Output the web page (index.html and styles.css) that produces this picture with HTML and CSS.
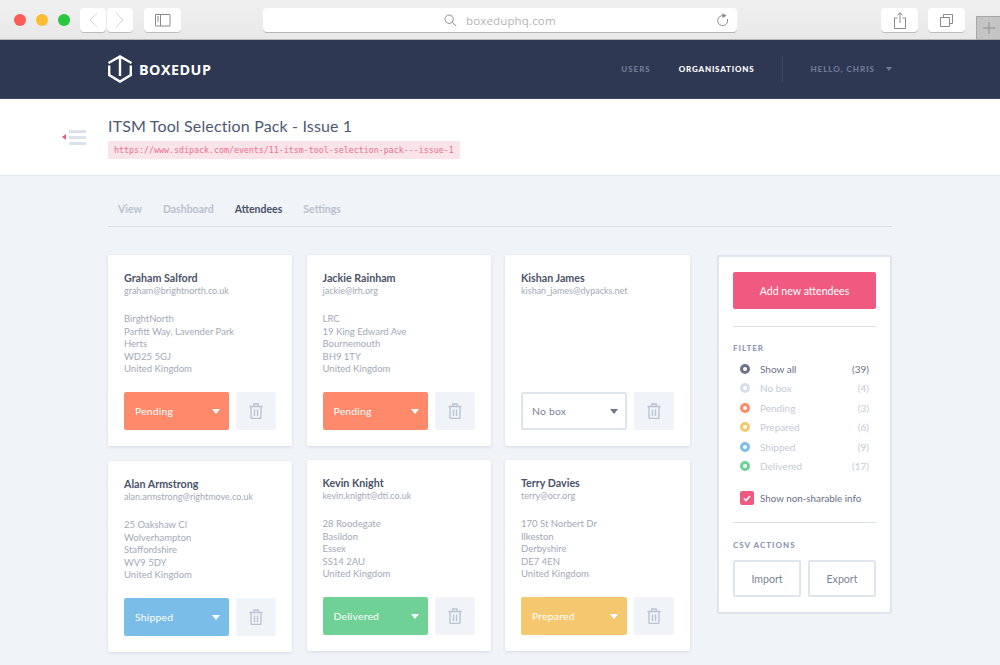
FILE: index.html
```html
<!DOCTYPE html>
<html lang="en">
<head>
    <meta charset="UTF-8">
    <title>Boxedup - Attendees</title>
    <link rel="stylesheet" href="styles.css">
</head>
<body>
    <!-- Browser chrome -->
    <div class="chrome">
        <div class="lights">
            <span class="light red"></span>
            <span class="light yellow"></span>
            <span class="light green"></span>
        </div>
        <div class="chrome-group">
            <button class="chrome-btn narrow"><svg width="12" height="16" viewBox="0 0 12 16"><path d="M10 1 3 8l7 7" fill="none" stroke="#d4d4d4" stroke-width="1"/></svg></button>
            <button class="chrome-btn narrow"><svg width="12" height="16" viewBox="0 0 12 16"><path d="M2 1l7 7-7 7" fill="none" stroke="#d4d4d4" stroke-width="1"/></svg></button>
        </div>
        <button class="chrome-btn wide sidebar-btn"><svg width="16" height="13" viewBox="0 0 16 13"><path d="M.5.5h14.5v11.5H.5zM5.5.5v11.5" fill="none" stroke="#8a8a8a"/><path d="M2 3h2M2 5h2M2 7h2" stroke="#8a8a8a"/></svg></button>
        <div class="address">
            <svg class="search" width="13" height="13" viewBox="0 0 13 13"><circle cx="5.2" cy="5.2" r="4.2" fill="none" stroke="#8f8f8f"/><path d="M8.2 8.2l4 4" stroke="#8f8f8f"/></svg>
            <span class="address-text">boxeduphq.com</span>
            <svg class="reload" width="13" height="14" viewBox="0 0 13 14"><path d="M7.5 2.7A5 5 0 1 0 11.4 6" fill="none" stroke="#8a8a8a"/><path d="M6.5 0l4 2.7-4 2.3z" fill="#8a8a8a"/></svg>
        </div>
        <button class="chrome-btn wide share-btn"><svg width="12" height="17" viewBox="0 0 12 17"><path d="M3.5 6H.5v10.5h11V6h-3M6 11V1M3.5 3.2 6 .8l2.500 2.400" fill="none" stroke="#8a8a8a"/></svg></button>
        <button class="chrome-btn wide tabs-btn"><svg width="13" height="13" viewBox="0 0 13 13"><path d="M.5 3.500h9v9h-9zM3.500 3.500v-3h9v9h-3" fill="none" stroke="#8a8a8a"/></svg></button>
        <div class="new-tab"><svg width="12" height="12" viewBox="0 0 12 12"><path d="M6 0v12M0 6h12" stroke="#8e8e8e"/></svg></div>
    </div>

    <!-- Top navigation -->
    <header class="topbar">
        <div class="logo">
            <svg width="26" height="28" viewBox="0 0 26 28"><path d="M2.200 10.500V20L13 26.500 23.800 20v-9.500M1.500 8 13 1.500 24.500 8M13 2v19" fill="none" stroke="#fff" stroke-width="2.400"/></svg>
            <span class="logo-text">BOXEDUP</span>
        </div>
        <nav class="topnav">
            <a class="topnav-link">USERS</a>
            <a class="topnav-link active">ORGANISATIONS</a>
            <span class="topnav-sep"></span>
            <a class="topnav-link hello">HELLO, CHRIS</a>
            <span class="caret-small"></span>
        </nav>
    </header>

    <!-- Event title -->
    <section class="event">
        <div class="toggle">
            <span class="toggle-arrow"></span>
            <div class="toggle-bars"><i></i><i></i><i></i></div>
        </div>
        <div>
            <h1 class="event-title">ITSM Tool Selection Pack - Issue 1</h1>
            <code class="event-url">https://www.sdipack.com/events/11-itsm-tool-selection-pack---issue-1</code>
        </div>
    </section>

    <main class="content">
        <div class="tabs">
            <a class="tab">View</a>
            <a class="tab">Dashboard</a>
            <a class="tab active">Attendees</a>
            <a class="tab">Settings</a>
        </div>

        <div class="layout">
            <div class="cards">
                <div class="card">
                    <h3>Graham Salford</h3>
                    <p class="email">graham@brightnorth.co.uk</p>
                    <p class="addr">BirghtNorth<br>Parfitt Way, Lavender Park<br>Herts<br>WD25 5GJ<br>United Kingdom</p>
                    <div class="card-actions">
                        <div class="status pending">Pending<span class="caret"></span></div>
                        <button class="trash"><svg width="14" height="16" viewBox="0 0 14 16"><path d="M2 4v10.200c0 .7.5 1.300 1.200 1.300h7.600c.7 0 1.200-.6 1.200-1.300V4M.5 3.500h13M4.800 3.300V1h4.400v2.300M5.500 6.500v6.500M8.500 6.500v6.500" fill="none" stroke="#b9c3d2" stroke-width="1.400"/></svg></button>
                    </div>
                </div>
                <div class="card">
                    <h3>Jackie Rainham</h3>
                    <p class="email">jackie@lrh.org</p>
                    <p class="addr">LRC<br>19 King Edward Ave<br>Bournemouth<br>BH9 1TY<br>United Kingdom</p>
                    <div class="card-actions">
                        <div class="status pending">Pending<span class="caret"></span></div>
                        <button class="trash"><svg width="14" height="16" viewBox="0 0 14 16"><path d="M2 4v10.200c0 .7.5 1.300 1.200 1.300h7.600c.7 0 1.200-.6 1.200-1.300V4M.5 3.500h13M4.800 3.300V1h4.400v2.300M5.500 6.500v6.500M8.500 6.500v6.500" fill="none" stroke="#b9c3d2" stroke-width="1.400"/></svg></button>
                    </div>
                </div>
                <div class="card">
                    <h3>Kishan James</h3>
                    <p class="email">kishan_james@dypacks.net</p>
                    <p class="addr"></p>
                    <div class="card-actions">
                        <div class="status nobox">No box<span class="caret"></span></div>
                        <button class="trash"><svg width="14" height="16" viewBox="0 0 14 16"><path d="M2 4v10.200c0 .7.5 1.300 1.200 1.300h7.600c.7 0 1.200-.6 1.200-1.300V4M.5 3.500h13M4.800 3.300V1h4.400v2.300M5.500 6.500v6.500M8.500 6.500v6.500" fill="none" stroke="#b9c3d2" stroke-width="1.400"/></svg></button>
                    </div>
                </div>
                <div class="card">
                    <h3>Alan Armstrong</h3>
                    <p class="email">alan.armstrong@rightmove.co.uk</p>
                    <p class="addr">25 Oakshaw Cl<br>Wolverhampton<br>Staffordshire<br>WV9 5DY<br>United Kingdom</p>
                    <div class="card-actions">
                        <div class="status shipped">Shipped<span class="caret"></span></div>
                        <button class="trash"><svg width="14" height="16" viewBox="0 0 14 16"><path d="M2 4v10.200c0 .7.5 1.300 1.200 1.300h7.600c.7 0 1.200-.6 1.200-1.300V4M.5 3.500h13M4.800 3.300V1h4.400v2.300M5.500 6.500v6.500M8.500 6.500v6.500" fill="none" stroke="#b9c3d2" stroke-width="1.400"/></svg></button>
                    </div>
                </div>
                <div class="card raised">
                    <h3>Kevin Knight</h3>
                    <p class="email">kevin.knight@dti.co.uk</p>
                    <p class="addr">28 Roodegate<br>Basildon<br>Essex<br>SS14 2AU<br>United Kingdom</p>
                    <div class="card-actions">
                        <div class="status delivered">Delivered<span class="caret"></span></div>
                        <button class="trash"><svg width="14" height="16" viewBox="0 0 14 16"><path d="M2 4v10.200c0 .7.5 1.300 1.200 1.300h7.600c.7 0 1.200-.6 1.200-1.300V4M.5 3.500h13M4.800 3.300V1h4.400v2.300M5.500 6.500v6.500M8.500 6.500v6.500" fill="none" stroke="#b9c3d2" stroke-width="1.400"/></svg></button>
                    </div>
                </div>
                <div class="card raised">
                    <h3>Terry Davies</h3>
                    <p class="email">terry@ocr.org</p>
                    <p class="addr">170 St Norbert Dr<br>Ilkeston<br>Derbyshire<br>DE7 4EN<br>United Kingdom</p>
                    <div class="card-actions">
                        <div class="status prepared">Prepared<span class="caret"></span></div>
                        <button class="trash"><svg width="14" height="16" viewBox="0 0 14 16"><path d="M2 4v10.200c0 .7.5 1.300 1.200 1.300h7.600c.7 0 1.200-.6 1.200-1.300V4M.5 3.500h13M4.800 3.300V1h4.400v2.300M5.500 6.500v6.500M8.500 6.500v6.500" fill="none" stroke="#b9c3d2" stroke-width="1.400"/></svg></button>
                    </div>
                </div>
            </div>

            <!-- Sidebar -->
            <aside class="panel">
                <button class="add-btn">Add new attendees</button>
                <hr class="panel-rule">
                <h4 class="panel-label">FILTER</h4>
                <ul class="filters">
                    <li class="filter selected"><span class="dot c-all"></span><span class="filter-name">Show all</span><span>(39)</span></li>
                    <li class="filter"><span class="dot c-nobox"></span><span class="filter-name">No box</span><span>(4)</span></li>
                    <li class="filter"><span class="dot c-pending"></span><span class="filter-name">Pending</span><span>(3)</span></li>
                    <li class="filter"><span class="dot c-prepared"></span><span class="filter-name">Prepared</span><span>(6)</span></li>
                    <li class="filter"><span class="dot c-shipped"></span><span class="filter-name">Shipped</span><span>(9)</span></li>
                    <li class="filter"><span class="dot c-delivered"></span><span class="filter-name">Delivered</span><span>(17)</span></li>
                </ul>
                <div class="share-info">
                    <span class="checkbox"><svg width="8" height="7" viewBox="0 0 8 7"><path d="M1 3.500 3 5.500 7 1" fill="none" stroke="#fff" stroke-width="1.600"/></svg></span>
                    Show non-sharable info
                </div>
                <hr class="panel-rule csv-rule">
                <h4 class="panel-label csv-label">CSV ACTIONS</h4>
                <div class="csv-actions">
                    <button class="csv-btn">Import</button>
                    <button class="csv-btn">Export</button>
                </div>
            </aside>
        </div>
    </main>
</body>
</html>
```

FILE: styles.css
```css
* {
    box-sizing: border-box;
}

body {
    margin: 0;
    height: 665px;
    overflow: hidden;
    background-color: #f0f3f8;
    font-family: "Lato", "Open Sans", sans-serif;
    color: #4a5269;
}

button {
    font-family: inherit;
    padding: 0;
}

/* Browser chrome */
.chrome {
    height: 40px;
    display: flex;
    align-items: flex-start;
    padding: 8px 0 0 14px;
    background: linear-gradient(#f0f0f0, #e8e8e8);
    border-bottom: 1px solid #b4b4b4;
    position: relative;
}

.lights {
    display: flex;
    gap: 10px;
    margin: 6px 10px 0 0;
}

.light {
    width: 12px;
    height: 12px;
    border-radius: 50%;
}

.red { background-color: #fc5b57; }
.yellow { background-color: #fdbb2e; }
.green { background-color: #29c73f; }

.chrome-group {
    display: flex;
    gap: 1px;
}

.chrome-btn {
    height: 24px;
    display: flex;
    align-items: center;
    justify-content: center;
    background-color: #fff;
    border: none;
    border-radius: 4px;
    box-shadow: 0 1px 0 #bdbdbd;
}

.narrow { width: 26px; }
.wide { width: 37px; }
.sidebar-btn { margin-left: 11px; }
.share-btn { margin-left: 144px; }
.tabs-btn { margin-left: 10px; }

.address {
    width: 474px;
    height: 24px;
    margin-left: 82px;
    display: flex;
    align-items: center;
    background-color: #fff;
    border-radius: 4px;
    box-shadow: 0 1px 0 #b5b5b5;
    padding-left: 181px;
}

.address-text {
    width: 89px;
    margin-left: 9px;
    font-family: "Open Sans", sans-serif;
    font-size: 11.500px;
    letter-spacing: .15px;
    white-space: nowrap;
    color: #b4b4b4;
}

.reload {
    margin-left: 161px;
}

.new-tab {
    position: absolute;
    right: 0;
    top: 16px;
    width: 24px;
    height: 24px;
    display: flex;
    align-items: center;
    justify-content: center;
    background-color: #c4c4c4;
    border: 1px solid #a8a8a8;
    border-right: none;
}

/* Top navigation */
.topbar {
    height: 59px;
    display: flex;
    align-items: center;
    justify-content: space-between;
    padding: 0 108px 0 107px;
    background-color: #2e3852;
    border-bottom: 1px solid #3b4a62;
}

.logo {
    display: flex;
    align-items: center;
    gap: 6px;
}

.logo-text {
    font-family: "Open Sans", sans-serif;
    font-weight: 700;
    font-size: 14.300px;
    letter-spacing: .5px;
    color: #fff;
}

.topnav {
    display: flex;
    align-items: center;
}

.topnav-link {
    font-size: 8px;
    font-weight: 900;
    letter-spacing: 1px;
    color: #6f7a97;
}

.topnav-link.active {
    color: #fff;
    margin-left: 28px;
    letter-spacing: .8px;
}

.topnav-sep {
    width: 1px;
    height: 26px;
    margin: 0 27px 0 28px;
    background-color: #3d4864;
}

.caret-small {
    width: 0;
    height: 0;
    margin-left: 11px;
    border-left: 3.500px solid transparent;
    border-right: 3.500px solid transparent;
    border-top: 4px solid #6f7a97;
}

/* Event title */
.event {
    height: 77px;
    display: flex;
    padding: 17px 0 0 62px;
    background-color: #fff;
    border-bottom: 1px solid #e4e8ef;
}

.toggle {
    display: flex;
    align-items: center;
    gap: 3px;
    height: 20px;
    margin-top: 11px;
    width: 46px;
}

.toggle-arrow {
    width: 0;
    height: 0;
    border-top: 3px solid transparent;
    border-bottom: 3px solid transparent;
    border-right: 4px solid #ef5a7e;
}

.toggle-bars i {
    display: block;
    width: 17px;
    height: 3px;
    margin: 3px 0;
    background-color: #dbe2eb;
}

.event-title {
    margin: 0 0 5px;
    font-size: 16px;
    font-weight: 400;
    letter-spacing: .15px;
    line-height: 20px;
    color: #4f5871;
}

.event-url {
    display: block;
    width: fit-content;
    padding: 0 6px;
    height: 18px;
    line-height: 18px;
    font-family: "DejaVu Sans Mono", monospace;
    font-size: 8.300px;
    color: #ee6d8d;
    background-color: #f8e4e9;
    border-radius: 2px;
}

/* Tabs */
.content {
    padding: 0 108px;
}

.tabs {
    display: flex;
    gap: 21px;
    height: 51px;
    padding: 26px 0 0 10px;
    border-bottom: 1px solid #d8dee8;
}

.tab {
    font-size: 10.500px;
    line-height: 14px;
    font-weight: 700;
    color: #b9c1d0;
}

.tab.active {
    color: #4a5269;
}

/* Cards */
.layout {
    display: flex;
    gap: 27px;
    margin-top: 28px;
}

.cards {
    width: 582px;
    display: grid;
    grid-template-columns: 184px 184px 185px;
    grid-auto-rows: 191px;
    column-gap: 14.500px;
    row-gap: 15px;
}

.card {
    display: flex;
    flex-direction: column;
    padding: 17px 16px 16px;
    background-color: #fff;
    border-radius: 2px;
    box-shadow: 0 1px 3px rgba(160, 175, 200, .35);
}

.card.raised {
    margin-top: -1px;
    margin-bottom: 1px;
}

.card h3 {
    margin: 0;
    font-size: 10.700px;
    line-height: 12px;
    font-weight: 700;
    color: #4a5269;
}

.email {
    margin: 0;
    font-size: 9px;
    line-height: 13px;
    color: #a2a9b8;
}

.addr {
    margin: 16px 0 0;
    flex: 1;
    font-size: 9.500px;
    line-height: 12.500px;
    color: #a2a9b8;
}

.card-actions {
    display: flex;
    gap: 7px;
}

.status {
    flex: 1;
    height: 38px;
    display: flex;
    align-items: center;
    justify-content: space-between;
    padding: 0 9px 0 11px;
    font-size: 10.400px;
    letter-spacing: .2px;
    color: #fff;
    border-radius: 2px;
}

.caret {
    width: 0;
    height: 0;
    border-left: 4px solid transparent;
    border-right: 4px solid transparent;
    border-top: 5px solid #fff;
}

.pending { background-color: #fe8a6b; }
.shipped { background-color: #7abde8; }
.delivered { background-color: #6fd195; }
.prepared { background-color: #f5c86f; }

.nobox {
    background-color: #fff;
    border: 2px solid #dfe5ed;
    color: #7b8394;
    padding: 0 7px 0 9px;
}

.nobox .caret {
    border-top-color: #6f7788;
}

.trash {
    width: 40px;
    height: 38px;
    display: flex;
    align-items: center;
    justify-content: center;
    background-color: #f0f3f8;
    border: none;
    border-radius: 2px;
}

/* Sidebar */
.panel {
    width: 175px;
    height: 359px;
    padding: 15px 14px 0;
    background-color: #fff;
    border: 2px solid #dfe5ed;
    border-radius: 2px;
}

.add-btn {
    width: 100%;
    height: 37px;
    font-size: 10.600px;
    color: #fff;
    background-color: #f05a80;
    border: none;
    border-radius: 2px;
}

.panel-rule {
    margin: 17px 0 0;
    border: none;
    border-top: 1px solid #dbe1ea;
}

.panel-label {
    margin: 16px 0 0;
    font-size: 8px;
    line-height: 10px;
    font-weight: 900;
    letter-spacing: 1px;
    color: #8f99b5;
}

.filters {
    list-style: none;
    margin: 6px 0 0;
    padding: 0 7px;
}

.filter {
    display: flex;
    align-items: center;
    height: 19.500px;
    font-size: 10px;
    color: #c4cad6;
}

.filter-name {
    flex: 1;
    margin-left: 10px;
}

.filter.selected {
    color: #6a7186;
}

.dot {
    width: 10px;
    height: 10px;
    border-radius: 50%;
    border: 3px solid;
}

.c-all { border-color: #6d7389; }
.c-nobox { border-color: #d8deea; }
.c-pending { border-color: #fe8a6b; }
.c-prepared { border-color: #f5c86f; }
.c-shipped { border-color: #7abde8; }
.c-delivered { border-color: #6fd195; }

.share-info {
    display: flex;
    align-items: center;
    gap: 6px;
    margin: 15px 0 0 7px;
    font-size: 9.800px;
    color: #6a7186;
}

.checkbox {
    width: 14px;
    height: 14px;
    display: flex;
    align-items: center;
    justify-content: center;
    background-color: #f05a80;
    border-radius: 2px;
}

.csv-rule {
    margin-top: 17px;
}

.csv-label {
    margin-top: 17px;
}

.csv-actions {
    display: flex;
    gap: 7px;
    margin-top: 10px;
}

.csv-btn {
    flex: 1;
    height: 37px;
    font-size: 10.600px;
    color: #7b8394;
    background-color: #fff;
    border: 2px solid #dfe5ed;
    border-radius: 2px;
}
```
